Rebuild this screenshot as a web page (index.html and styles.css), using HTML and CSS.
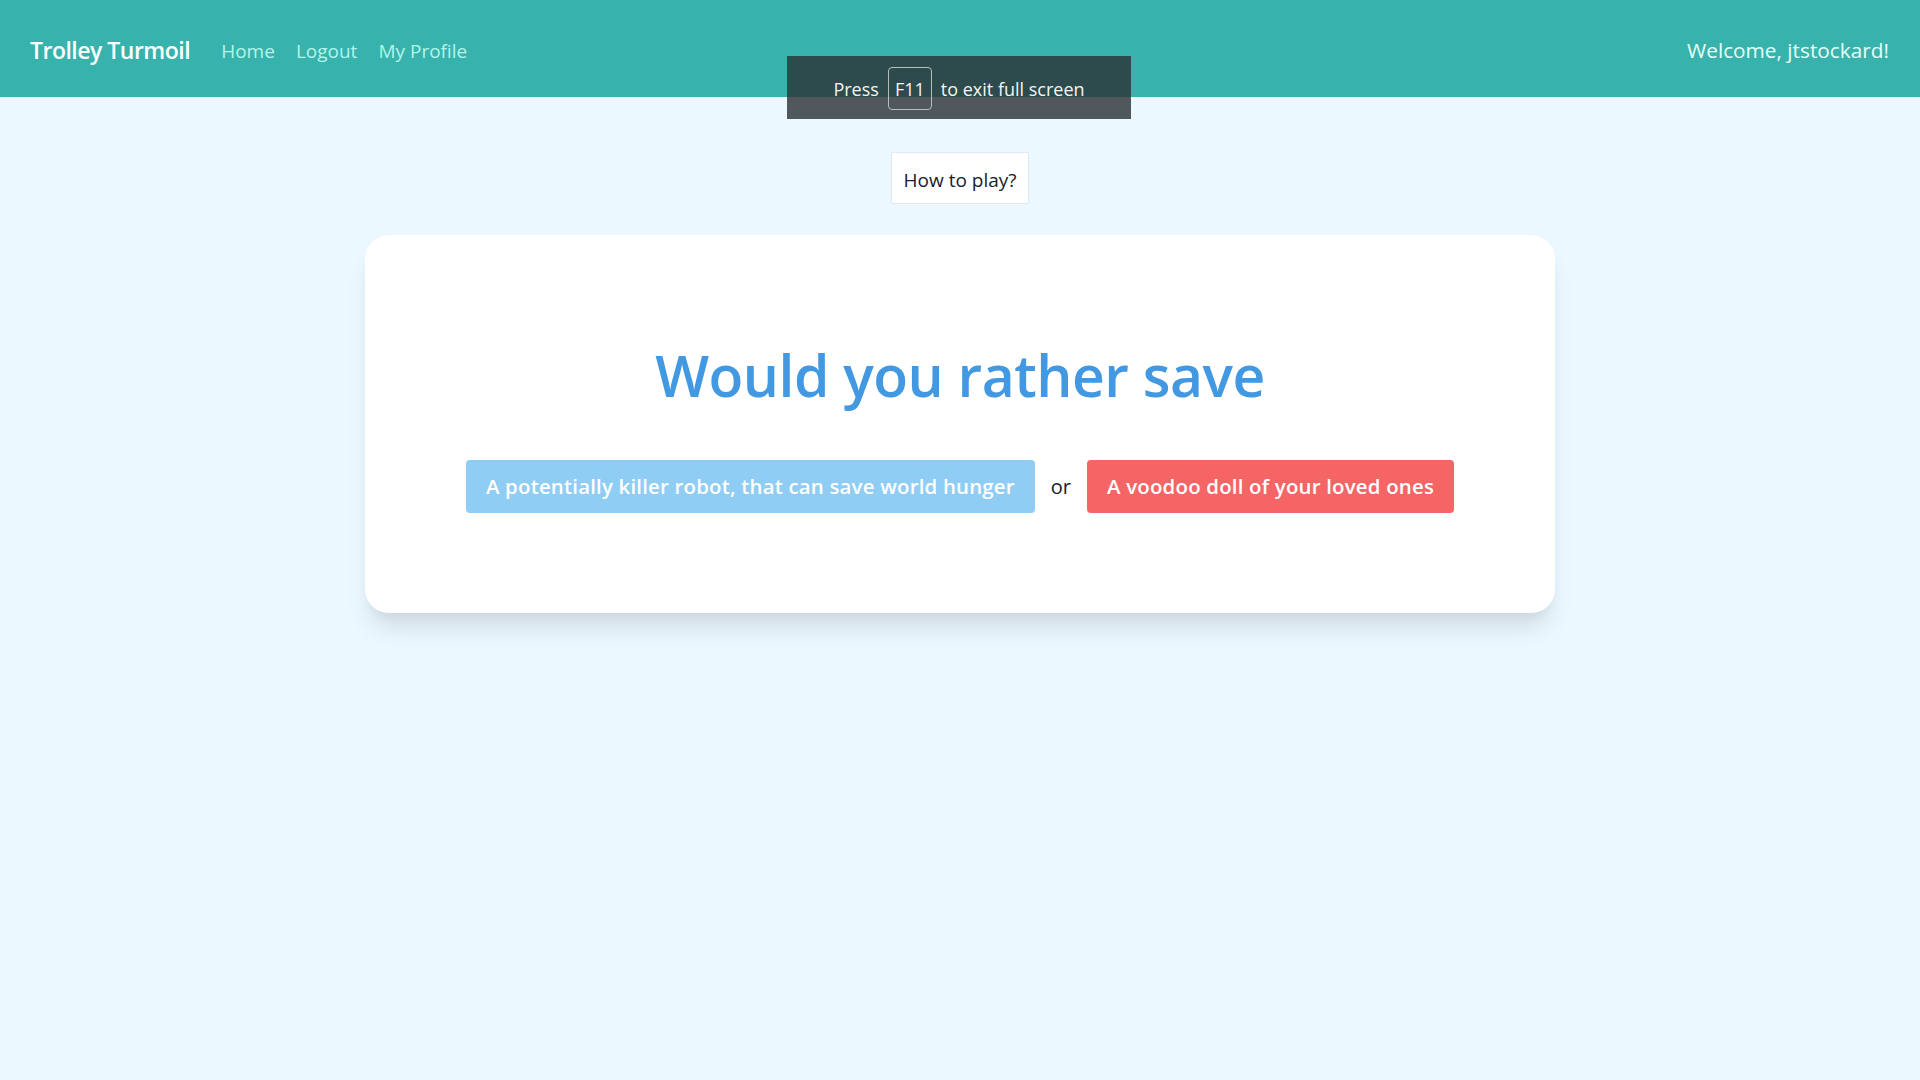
FILE: index.html
```html
<!DOCTYPE html>
<html lang="en">
<head>
<meta charset="utf-8">
<title>Trolley Turmoil</title>
<link rel="stylesheet" href="styles.css">
</head>
<body>
<nav class="navbar">
  <div class="nav-left">
    <a class="brand" href="#">Trolley Turmoil</a>
    <a class="nav-link" href="#">Home</a>
    <a class="nav-link" href="#">Logout</a>
    <a class="nav-link" href="#">My Profile</a>
  </div>
  <div class="welcome">Welcome, jtstockard!</div>
</nav>

<div class="fs-toast">
  <span>Press</span>
  <span class="key">F11</span>
  <span>to exit full screen</span>
</div>

<main class="main">
  <button class="how-btn">How to play?</button>
  <section class="card">
    <h1 class="question">Would you rather save</h1>
    <div class="choices">
      <button class="choice choice-blue">A potentially killer robot, that can save world hunger</button>
      <span class="or">or</span>
      <button class="choice choice-red">A voodoo doll of your loved ones</button>
    </div>
  </section>
</main>
</body>
</html>
```
FILE: styles.css
```css
* { box-sizing: border-box; }
html, body {
  margin: 0;
  padding: 0;
}
body {
  background: #ebf8ff;
  font-family: "Open Sans", "Noto Sans", sans-serif;
  color: #1a202c;
  min-height: 1080px;
}
.navbar {
  height: 97px;
  background: #38b2ac;
  display: flex;
  align-items: center;
  justify-content: space-between;
  padding: 2px 30px 0;
}
.nav-left {
  display: flex;
  align-items: center;
}
.brand {
  color: #ffffff;
  text-decoration: none;
  font-size: 23px;
  font-weight: 600;
  letter-spacing: -0.5px;
  margin-right: 31px;
}
.nav-link {
  color: #b2f5ea;
  text-decoration: none;
  font-size: 19px;
  margin-right: 21px;
  padding-top: 2px;
}
.welcome {
  color: #e6fffa;
  font-size: 20.8px;
  margin-right: 1px;
}
.fs-toast {
  position: absolute;
  top: 56px;
  left: 787px;
  width: 344px;
  height: 63px;
  background: rgba(43, 48, 52, 0.8);
  color: #f4f4f4;
  font-size: 18px;
  display: flex;
  align-items: center;
  justify-content: center;
  gap: 9px;
  padding-top: 2px;
}
.key {
  border: 1.5px solid #b8bcbe;
  border-radius: 4px;
  width: 44px;
  height: 43px;
  display: flex;
  align-items: center;
  justify-content: center;
}
.main {
  display: flex;
  flex-direction: column;
  align-items: center;
  padding-top: 55px;
}
.how-btn {
  width: 138px;
  height: 52px;
  background: #ffffff;
  border: 1px solid #e2e8f0;
  border-radius: 2px;
  font-family: inherit;
  font-size: 19px;
  color: #1a202c;
  padding: 3px 0 0;
}
.card {
  margin-top: 31px;
  width: 1190px;
  background: #ffffff;
  border-radius: 24px;
  box-shadow: 0 20px 25px -5px rgba(0, 0, 0, 0.1), 0 10px 10px -5px rgba(0, 0, 0, 0.04);
  padding: 104px 0 100px;
  display: flex;
  flex-direction: column;
  align-items: center;
}
.question {
  margin: 0;
  font-size: 57px;
  line-height: 72px;
  font-weight: 600;
  color: #4299e1;
  letter-spacing: -0.5px;
}
.choices {
  margin-top: 49px;
  display: flex;
  align-items: center;
}
.choice {
  border: none;
  border-radius: 4px;
  color: #ffffff;
  font-family: inherit;
  font-size: 20.4px;
  font-weight: 600;
  letter-spacing: 0.2px;
  line-height: 29px;
  padding: 12px 20px;
  box-shadow: 0 0 4px rgba(0, 0, 0, 0.03);
}
.choice-blue { background: #90cdf4; }
.choice-red { background: #f56565; }
.or {
  margin: 0 16px;
  font-size: 20px;
  color: #1a202c;
}
```
